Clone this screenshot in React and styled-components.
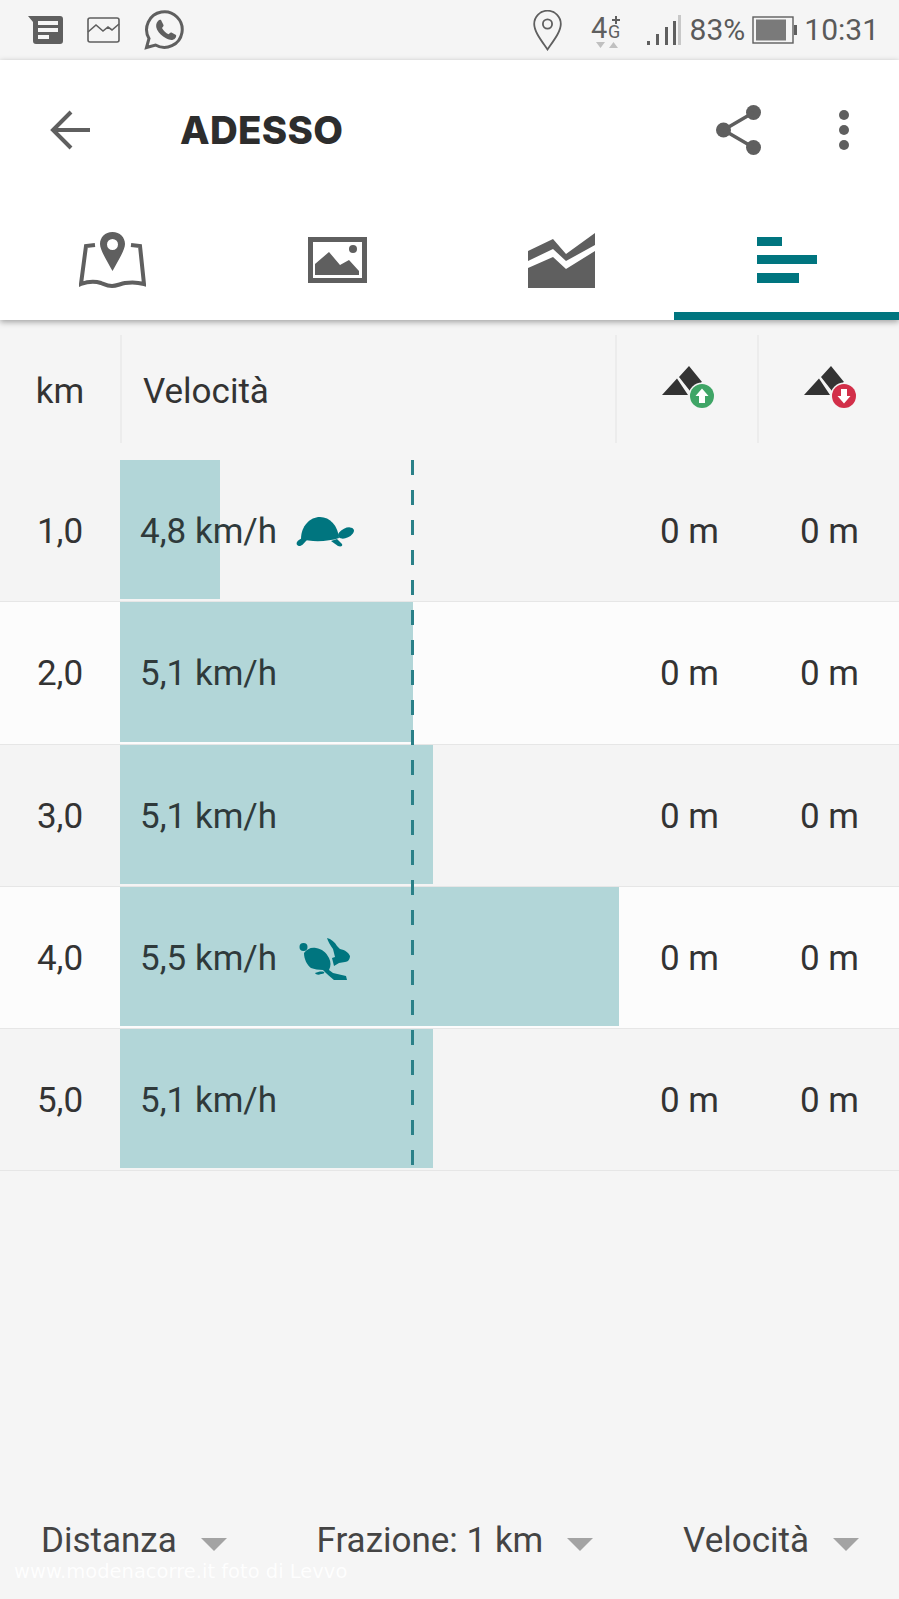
import React from "react";
import styled, { createGlobalStyle } from "styled-components";

const Global = createGlobalStyle`
  html, body { margin: 0; padding: 0; background: #f5f5f5; }
  * { box-sizing: border-box; }
`;

const Page = styled.div`
  position: relative;
  width: 899px;
  height: 1599px;
  display: flex;
  flex-direction: column;
  overflow: hidden;
  background: #f5f5f5;
  font-family: Roboto, "Liberation Sans", sans-serif;
  color: #333;
`;

const StatusBar = styled.div`
  height: 60px;
  flex: none;
  display: flex;
  align-items: center;
  justify-content: space-between;
  padding: 0 20px 0 28px;
  background: #f5f5f5;
  color: #5f5f5f;
`;
const StatusGroup = styled.div`
  display: flex;
  align-items: center;
  gap: ${(p) => p.$gap}px;
`;
const StatusRight = styled.div`
  display: flex;
  align-items: center;
`;
const Spaced = styled.span`
  display: flex;
  margin-left: ${(p) => p.$ml || 0}px;
`;
const StatusText = styled.span`
  font-size: 30px;
  line-height: 60px;
  font-weight: 400;
  color: #5a5a5a;
  margin-left: ${(p) => p.$ml || 0}px;
`;

const Header = styled.header`
  flex: none;
  background: #fff;
  box-shadow: 0 2px 6px rgba(0, 0, 0, 0.35);
  position: relative;
  z-index: 2;
`;
const AppBar = styled.div`
  height: 140px;
  display: flex;
  align-items: center;
  padding: 0 50px;
`;
const Title = styled.h1`
  margin: 0 0 0 90px;
  font-family: Inter, sans-serif;
  font-size: 38.5px;
  font-weight: 800;
  letter-spacing: 0.3px;
  color: #2d2d2d;
  flex: 1;
`;
const Actions = styled.div`
  display: flex;
  align-items: center;
  gap: 77px;
`;
const Tabs = styled.div`
  height: 120px;
  display: grid;
  grid-template-columns: repeat(4, 1fr);
`;
const Tab = styled.div`
  display: flex;
  align-items: center;
  justify-content: center;
  padding-top: 8px;
  color: ${(p) => (p.$active ? "#00757f" : "#5f5f5f")};
  border-bottom: 8px solid ${(p) => (p.$active ? "#00757f" : "transparent")};
`;

const Table = styled.main`
  flex: 1;
  padding-top: 15px;
`;
const HeadRow = styled.div`
  height: 108px;
  display: grid;
  grid-template-columns: 120px 1fr 142px 142px;
  margin-bottom: 17px;
  font-size: 35px;
`;
const HeadCell = styled.div`
  display: flex;
  align-items: center;
  justify-content: ${(p) => (p.$center ? "center" : "flex-start")};
  padding-top: 5px;
  padding-left: ${(p) => p.$pl || 0}px;
  border-left: ${(p) => (p.$first ? "none" : "2px solid #ececec")};
`;
const Body = styled.div`
  position: relative;
`;
const Row = styled.div`
  height: 142.3px;
  display: grid;
  grid-template-columns: 120px 1fr 142px 142px;
  align-items: stretch;
  padding-bottom: 2px;
  font-size: 35px;
  background: ${(p) => (p.$alt ? "#fcfcfc" : "#f4f4f4")};
  border-bottom: 1px solid #e6e6e6;
`;
const KmCell = styled.div`
  display: flex;
  align-items: center;
  justify-content: center;
  padding-top: 4px;
`;
const SpeedCell = styled.div`
  position: relative;
  display: flex;
  align-items: center;
  padding: 4px 0 0 20px;
`;
const Bar = styled.div`
  position: absolute;
  left: 0;
  top: 0;
  bottom: 0;
  background: #b2d6d8;
`;
const SpeedText = styled.span`
  position: relative;
  color: #2f3a3b;
`;
const SpeedIcon = styled.svg`
  position: relative;
  color: #00757f;
  margin-left: ${(p) => p.$ml}px;
`;
const ClimbCell = styled.div`
  display: flex;
  align-items: center;
  justify-content: flex-end;
  padding: 4px ${(p) => p.$pr}px 0 0;
`;
const ClimbGlyph = styled.svg`
  margin: -9px 0 0 1px;
`;
const AverageLine = styled.div`
  position: absolute;
  left: 411px;
  top: 0;
  bottom: 2px;
  width: 3px;
  background: repeating-linear-gradient(to bottom, #2a8088 0 15px, transparent 15px 30px);
`;

const Footer = styled.footer`
  height: 99px;
  flex: none;
  display: flex;
  justify-content: space-between;
  align-items: flex-start;
  padding: 21px 40px 0 41px;
  font-size: 35px;
  color: #444;
`;
const Picker = styled.div`
  display: flex;
  align-items: center;
  gap: 24px;
  line-height: 40px;
`;
const Caret = styled.span`
  width: 0;
  height: 0;
  margin-top: 6px;
  border-left: 13px solid transparent;
  border-right: 13px solid transparent;
  border-top: 13px solid #a3a3a3;
`;
const Watermark = styled.div`
  position: absolute;
  left: 14px;
  top: 1560px;
  font-family: "DejaVu Sans", sans-serif;
  font-size: 19.5px;
  color: #fff;
  opacity: 0.9;
  white-space: nowrap;
`;

const grey = "#5f5f5f";

const MessageIcon = () => (
  <svg width="35" height="28" viewBox="0 0 35 28">
    <path fill={grey} d="M0 0H32a3 3 0 0 1 3 3V25a3 3 0 0 1-3 3H8a3 3 0 0 1-3-3V6Z" />
    <path fill="#f5f5f5" d="M10 5H30V9H10ZM10 12H30V16H10ZM10 19H21V23H10Z" />
  </svg>
);
const PictureIcon = () => (
  <svg width="33" height="26" viewBox="0 0 33 26" fill="none" stroke={grey} strokeWidth="1.6">
    <rect x="1" y="1" width="31" height="24" rx="2" />
    <path d="M1 15 9 8l7 6 5-4 4 3 7-6" />
  </svg>
);
const WhatsappIcon = () => (
  <svg width="40" height="40" viewBox="0 0 40 40">
    <path fill="none" stroke={grey} strokeWidth="3"
      d="M2.500 37.500 5 28.500A17.800 17.800 0 1 1 11.500 35Z" />
    <path fill={grey}
      d="M14 11c1-1 2-1.500 3-1l2.500 5c.3.8-.2 1.500-1.500 3 1.500 3 4 5 6.500 6.300 1.500-1.300 2.200-2 3-1.800l4.500 2.500c.5 1 0 2.500-1 3.500-2 2-5 2-9-.2-4-2-7-5-9-8.800-1.500-3.500-1-6.500 1-8.500Z" />
  </svg>
);
const PinIcon = () => (
  <svg width="29" height="41" viewBox="0 0 29 41" fill="none" stroke={grey} strokeWidth="1.800">
    <path d="M14.500 39.500C8 30 1.200 21.500 1.200 14a13.300 13.300 0 0 1 26.600 0C27.800 21.500 21 30 14.500 39.500Z" />
    <circle cx="14.500" cy="14" r="4.600" />
  </svg>
);
const NetworkIcon = () => (
  <svg width="32" height="40" viewBox="0 -4 32 40">
    <text x="0" y="24" fontFamily="Roboto, sans-serif" fontSize="29" fill={grey}>4</text>
    <text x="17" y="24" fontFamily="Roboto, sans-serif" fontSize="18" fill={grey}>G</text>
    <path fill={grey} d="M24 2h2v3h3v2h-3v3h-2V7h-3V5h3Z" />
    <path fill="#c0c0c0" d="M5 28h9l-4.500 6ZM18 34h9l-4.500-6Z" />
  </svg>
);
const SignalIcon = () => (
  <svg width="34" height="31" viewBox="0 0 34 31">
    <path fill={grey} d="M0 26h3v4H0ZM9 19h3v11H9ZM18 12h3v18h-3ZM26 6h3v24h-3Z" />
    <path fill="#c8c8c8" d="M31 0h3v30h-3Z" />
  </svg>
);
const BatteryIcon = () => (
  <svg width="45" height="28" viewBox="0 0 45 28">
    <rect x="1" y="1" width="40" height="26" fill="none" stroke={grey} strokeWidth="1.400" />
    <rect x="4" y="3.500" width="30" height="21" fill="#7a7a7a" />
    <rect x="42" y="9" width="3" height="10" fill={grey} />
  </svg>
);
const BackIcon = () => (
  <svg width="40" height="40" viewBox="0 0 40 40" fill="none" stroke={grey} strokeWidth="4">
    <path d="M40 20H4M21 2 3 20l18 18" />
  </svg>
);
const ShareIcon = () => (
  <svg width="46" height="50" viewBox="0 0 46 50" fill={grey}>
    <circle cx="37.500" cy="7.500" r="7.500" />
    <circle cx="7.500" cy="25" r="7.500" />
    <circle cx="37.500" cy="42.500" r="7.500" />
    <path d="M37.500 7.500 7.500 25l30 17.500" fill="none" stroke={grey} strokeWidth="3.500" />
  </svg>
);
const MoreIcon = () => (
  <svg width="10" height="40" viewBox="0 0 10 40" fill={grey}>
    <circle cx="5" cy="5" r="5" />
    <circle cx="5" cy="20" r="5" />
    <circle cx="5" cy="35" r="5" />
  </svg>
);
const MapTabIcon = () => (
  <svg width="67" height="56" viewBox="0 0 67 56">
    <path fill="none" stroke="currentColor" strokeWidth="4"
      d="M16 13 7 14 2 52c8-3 14-3 20-1 5 2 7 3 11 3s8-2 13-3c6-1 12-1 19 1L61 14l-9-1" />
    <path fill="currentColor" fillRule="evenodd"
      d="M33.500 0C26 0 21 5.500 21 12c0 6 7 17 12.500 27C39 29 46 18 46 12 46 5.500 41 0 33.500 0Zm0 7a5.500 5.500 0 1 1 0 11 5.500 5.500 0 0 1 0-11Z" />
  </svg>
);
const PictureTabIcon = () => (
  <svg width="59" height="46" viewBox="0 0 59 46" fill="currentColor">
    <path fillRule="evenodd" d="M0 0H59V46H0ZM5 5V41H54V5Z" />
    <circle cx="45" cy="12" r="4" />
    <path d="M7 38V27L21 15 32 28l9-5 10 11V38Z" />
  </svg>
);
const ChartTabIcon = () => (
  <svg width="67" height="55" viewBox="0 0 67 55" fill="currentColor">
    <path d="M0 18 25 6 38 21 67 0V12L38 28 25 16 0 28Z" />
    <path d="M0 35 25 24 38 36 67 18V55H0Z" />
  </svg>
);
const BarsTabIcon = () => (
  <svg width="60" height="47" viewBox="0 0 60 47" fill="currentColor">
    <path d="M0 0H25V9H0ZM0 18H60V27H0ZM0 36H42V46H0Z" />
  </svg>
);
const ClimbIcon = ({ color, down }) => (
  <ClimbGlyph width="56" height="46" viewBox="0 0 56 46">
    <path fill="#333" d="M2 31 17 14.500 28 31ZM19 13 29 2 42 18 30 27Z" />
    <circle cx="42" cy="32" r="13.500" fill="#f5f5f5" />
    <circle cx="42" cy="32" r="12" fill={color} />
    <path fill="#fff" transform={down ? "rotate(180 42 32)" : undefined} d="M42 24.500 48.500 32H45v7h-6v-7h-3.500Z" />
  </ClimbGlyph>
);
const TurtleIcon = () => (
  <SpeedIcon $ml={19} width="58" height="31" viewBox="0 0 58 31" fill="currentColor">
    <path d="M5 23C5 10 14 1 24 1s18 9 19 21C32 26 14 26 5 23Z" />
    <ellipse cx="50" cy="17" rx="8.500" ry="4.800" transform="rotate(-25 50 17)" />
    <path d="M1 26c1-2 3-3 6-4l4 2c-2 2-5 6-7 6-3 0-4-2-3-4Z" />
    <path d="M35 25l6-2 5 5c1 2-1 3-4 2Z" />
  </SpeedIcon>
);
const RabbitIcon = () => (
  <SpeedIcon $ml={22} width="52" height="45" viewBox="0 0 52 45" fill="currentColor">
    <circle cx="4.500" cy="11" r="4" />
    <path d="M5 17c3-4 7-6 12-5 6 1 10 4 13 10 2 4 2 8 0 12l4 3 13 3 1 4H35c-4-3-8-7-11-10-4 0-9-1-12-2-4-3-7-9-7-15Z" />
    <path d="M28 2c4 1 8 4 10 8l3 3c5 1 9 4 10 7 0 3-2 6-5 6l-6 1-5 3-2-8 3-1-2-8c-3-4-5-8-6-11Z" />
    <path d="M16 37c3-1 6-2 9-1 1 1-1 2-3 2-2 1-5 1-6-1Z" />
  </SpeedIcon>
);

const rows = [
  { km: "1,0", speed: "4,8 km/h", width: 100, icon: <TurtleIcon /> },
  { km: "2,0", speed: "5,1 km/h", width: 293 },
  { km: "3,0", speed: "5,1 km/h", width: 313 },
  { km: "4,0", speed: "5,5 km/h", width: 499, icon: <RabbitIcon /> },
  { km: "5,0", speed: "5,1 km/h", width: 313 },
];

export default function App() {
  return (
    <Page>
      <Global />
      <StatusBar>
        <StatusGroup $gap={24}>
          <MessageIcon />
          <PictureIcon />
          <WhatsappIcon />
        </StatusGroup>
        <StatusRight>
          <PinIcon />
          <Spaced $ml={29}><NetworkIcon /></Spaced>
          <Spaced $ml={24}><SignalIcon /></Spaced>
          <StatusText $ml={9}>83%</StatusText>
          <Spaced $ml={7}><BatteryIcon /></Spaced>
          <StatusText $ml={7}>10:31</StatusText>
        </StatusRight>
      </StatusBar>
      <Header>
        <AppBar>
          <BackIcon />
          <Title>ADESSO</Title>
          <Actions>
            <ShareIcon />
            <MoreIcon />
          </Actions>
        </AppBar>
        <Tabs>
          <Tab><MapTabIcon /></Tab>
          <Tab><PictureTabIcon /></Tab>
          <Tab><ChartTabIcon /></Tab>
          <Tab $active><BarsTabIcon /></Tab>
        </Tabs>
      </Header>
      <Table>
        <HeadRow>
          <HeadCell $first $center>km</HeadCell>
          <HeadCell $pl={21}>Velocità</HeadCell>
          <HeadCell $center><ClimbIcon color="#3fa566" /></HeadCell>
          <HeadCell $center><ClimbIcon color="#d22f49" down /></HeadCell>
        </HeadRow>
        <Body>
          {rows.map((r, i) => (
            <Row key={r.km} $alt={i % 2 === 1}>
              <KmCell>{r.km}</KmCell>
              <SpeedCell>
                <Bar style={{ width: r.width }} />
                <SpeedText>{r.speed}</SpeedText>
                {r.icon}
              </SpeedCell>
              <ClimbCell $pr={38}>0 m</ClimbCell>
              <ClimbCell $pr={40}>0 m</ClimbCell>
            </Row>
          ))}
          <AverageLine />
        </Body>
      </Table>
      <Footer>
        <Picker>Distanza<Caret /></Picker>
        <Picker>Frazione: 1 km<Caret /></Picker>
        <Picker>Velocità<Caret /></Picker>
      </Footer>
      <Watermark>www.modenacorre.it foto di Levvo</Watermark>
    </Page>
  );
}
